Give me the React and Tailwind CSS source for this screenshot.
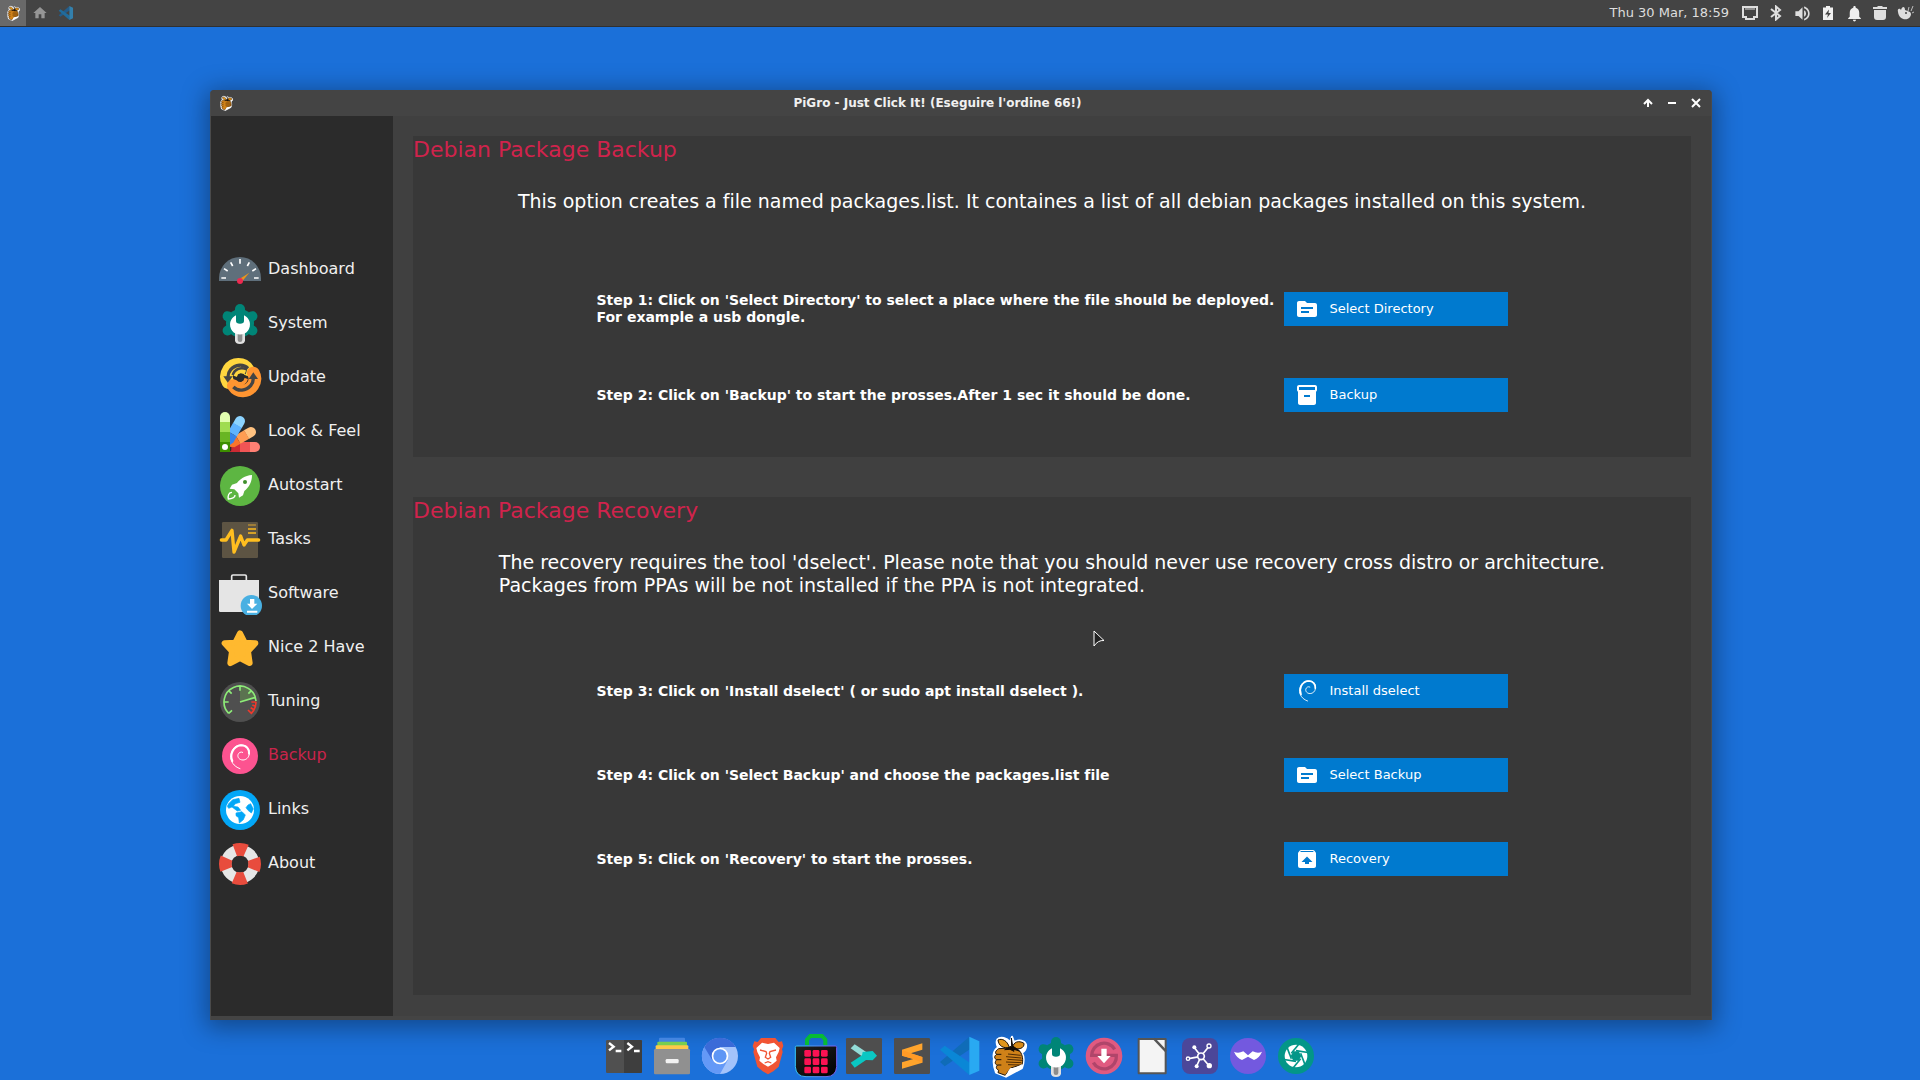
import React from "react";
import { MdSource, MdInventory2, MdUnarchive, MdHome, MdVolumeUp, MdNotifications } from "react-icons/md";

/* ---------- shared icon frame ---------- */
function Icon({ className = "size-11", children }) {
  return (
    <svg viewBox="0 0 132 132" className={`shrink-0 ${className}`} fill="none" aria-hidden="true">
      {children}
    </svg>
  );
}

/* ---------- brand icon ---------- */
function BerryIcon({ className }) {
  return (
    <Icon className={className}>
      <path d="M34 16C44 6 62 12 72 24L78 8 84 24C98 16 116 20 120 32C122 46 114 52 108 56C114 68 114 86 108 102L60 128 30 116C22 96 22 84 24 74C20 60 24 50 36 40C32 32 30 24 34 16Z" fill="#fff" stroke="#fff" strokeWidth="6" strokeLinejoin="round" />
      <path d="M38 44C28 50 26 58 32 61C24 66 24 74 32 77C26 84 26 90 34 94C28 100 32 106 38 109L36 116L58 124L74 102L108 92C112 78 110 64 102 52L72 42Z" fill="#cf8118" stroke="#1c1208" strokeWidth="3" strokeLinejoin="round" />
      <path d="M32 61h14M32 77h14M34 93h12" stroke="#1c1208" strokeWidth="3" />
      <path d="M66 60l38 4M60 68l46 4M64 76l44 3M60 84l46 2M66 92l38 1" stroke="#4f2c05" strokeWidth="3" />
      <path d="M56 127C66 118 66 108 74 102C84 102 94 98 109 90L105 103Z" fill="#fff" />
      <path d="M36 18C48 12 64 20 70 40C52 44 38 36 36 18Z" fill="#e0961c" stroke="#1c1208" strokeWidth="3" />
      <path d="M80 40C82 24 98 18 114 28C116 42 98 50 80 40Z" fill="#d98b16" stroke="#1c1208" strokeWidth="3" />
      <path d="M76 12L77 36L56 47L72 46L84 52L82 44L100 50L80 36Z" fill="#140d05" stroke="#140d05" strokeWidth="3" />
    </Icon>
  );
}

/* ---------- sidebar icons ---------- */
function DashboardIcon() {
  return (
    <Icon>
      <path d="M3 102V93A63 63 0 0 1 129 93V102Z" fill="#5f6f7b" />
      <path d="M66 36V50M38 46L44 57M94 46L88 57M18 65L29 72M114 65L103 72M10 93H24M108 93H122" stroke="#fff" strokeWidth="5" />
      <path d="M63 97L94 77L71 105Z" fill="#e8951c" />
      <circle cx="66" cy="102" r="9" fill="#ee2a50" />
    </Icon>
  );
}
function WrenchGearIcon({ className }) {
  return (
    <Icon className={className}>
      <g fill="#008577">
        <circle cx="66" cy="67" r="42" />
        <path d="M51 24a15 15 0 0 1 30 0V50H51Z" />
        <path d="M51 24a15 15 0 0 1 30 0V50H51Z" transform="rotate(60 66 67)" />
        <path d="M51 24a15 15 0 0 1 30 0V50H51Z" transform="rotate(120 66 67)" />
        <path d="M51 24a15 15 0 0 1 30 0V50H51Z" transform="rotate(240 66 67)" />
        <path d="M51 24a15 15 0 0 1 30 0V50H51Z" transform="rotate(300 66 67)" />
      </g>
      <path d="M51 88H81V118Q81 129 66 129Q51 129 51 118Z" fill="#e0e0e0" />
      <path d="M59 97H73V117Q73 123 66 123Q59 123 59 117Z" fill="#8c8c8c" />
      <path d="M54 43V60Q54 68 66 68Q78 68 78 60V43A30 30 0 1 1 54 43Z" fill="#fff" />
    </Icon>
  );
}
function UpdateHalf({ color }) {
  return (
    <>
      <path d="M90 44C76 22 46 24 32 44C24 56 22 68 30 82" stroke={color} strokeWidth="38" strokeLinecap="round" />
      <path d="M90 40C76 26 52 28 38 44C32 51 30 56 30 66" stroke="#444" strokeWidth="10" />
      <path d="M16 64H44L30 84Z" fill="#444" />
    </>
  );
}
function UpdateIcon() {
  return (
    <Icon>
      <UpdateHalf color="#ffd63f" />
      <g transform="rotate(180 68 68)"><UpdateHalf color="#ff9531" /></g>
      <path d="M50 62C54 48 66 42 86 48" stroke="#444" strokeWidth="20" />
      <path d="M52 64C56 52 68 46 82 52" stroke="#ffd63f" strokeWidth="12" />
      <path d="M84 70C80 84 70 90 54 84" stroke="#ff9531" strokeWidth="12" />
      <path d="M60 58L68 55L77 59L80 68L76 77L68 81L60 77L56 68Z" fill="#2b2b2b" />
    </Icon>
  );
}
function Swatch({ angle, colors }) {
  return (
    <g transform={`rotate(${angle} 21 114)`}>
      <path d="M6 40V24a15 15 0 0 1 30 0V40Z" fill={colors[0]} />
      <path d="M6 39H36V69H6Z" fill={colors[1]} />
      <path d="M6 69H36V99H6Z" fill={colors[2]} />
      <path d="M6 99H36V129H6Z" fill={colors[3]} />
    </g>
  );
}
function LookIcon() {
  return (
    <Icon>
      <Swatch angle={90} colors={["#ff8074", "#f05555", "#cc2a33", "#b51d28"]} />
      <path d="M36 129L6 129V90H50V110Z" fill="#2b2b2b" />
      <path d="M36 129L62 99H40V129Z" fill="#cc2a33" />
      <g transform="rotate(60 21 114)">
        <path d="M6 40V24a15 15 0 0 1 30 0V40Z" fill="#ffc280" />
        <path d="M6 39H36V69H6Z" fill="#ff9d52" />
        <path d="M6 69H36V90L22 109L6 94Z" fill="#f9752b" />
      </g>
      <g transform="rotate(30 21 114)">
        <path d="M6 40V24a15 15 0 0 1 30 0V40Z" fill="#8cd3ff" />
        <path d="M6 39H36V69H6Z" fill="#5fb3ff" />
        <path d="M6 69H36V90L22 120L6 104Z" fill="#3584ea" />
      </g>
      <Swatch angle={0} colors={["#e2ffb0", "#a0dc50", "#69b523", "#3d8f00"]} />
      <circle cx="21" cy="114" r="9" fill="#fff" />
    </Icon>
  );
}
function AutostartIcon() {
  return (
    <Icon>
      <circle cx="66" cy="69" r="60" fill="#5db642" />
      <path d="M102 36C80 38 66 48 57 60L42 65L35 77L49 79L61 91L63 104L75 97L79 84C94 72 102 56 102 36Z" fill="#fff" />
      <circle cx="81" cy="57" r="6" fill="#3f8f2c" />
      <path d="M42 88C32 88 29 98 31 108C41 107 52 104 51 96" stroke="#fff" strokeWidth="4" />
    </Icon>
  );
}
function TasksIcon() {
  return (
    <Icon>
      <rect x="12" y="15" width="108" height="108" rx="4" fill="#5d5443" />
      <path d="M90 24H114" stroke="#ac8638" strokeWidth="5" />
      <path d="M90 36H114M90 48H114" stroke="#fbb91f" strokeWidth="5" />
      <path d="M10 69H24L42 40L48 105L68 57L78 84L88 69H122" stroke="#ffbe1f" strokeWidth="10" strokeLinecap="round" strokeLinejoin="round" />
    </Icon>
  );
}
function SoftwareIcon() {
  return (
    <Icon>
      <path d="M41 28V16Q41 12 45 12H81Q85 12 85 16V28" stroke="#e8e8e8" strokeWidth="5" />
      <path d="M3 27H123V119Q123 123 119 123H7Q3 123 3 119Z" fill="#e5e5e5" />
      <circle cx="100" cy="104" r="32" fill="#49b0e2" />
      <path d="M96 84H109V98H118L102 114L87 98H96ZM87 119H118V125H87Z" fill="#fff" />
    </Icon>
  );
}
function StarIcon() {
  return (
    <Icon>
      <path d="M66 25L80 53L112 55L90 79L95 114L66 99L37 114L42 79L20 55L52 53Z" fill="#ffb92f" stroke="#ffb92f" strokeWidth="18" strokeLinejoin="round" />
    </Icon>
  );
}
function TuningIcon() {
  return (
    <Icon>
      <circle cx="66" cy="69" r="60" fill="#4f4f4f" />
      <path d="M66 69V22A47 47 0 0 1 110 54Z" fill="#5b7350" />
      <path d="M32 103A48 48 0 1 1 114 66M66 21V35M32 35L41 44M100 35L91 44M18 69H32M32 103L42 94M66 69L112 55" stroke="#8deb78" strokeWidth="5" />
      <path d="M114 68A48 48 0 0 1 100 103L90 93M100 69H114M103 78L112 82M98 86L108 92" stroke="#f0392c" strokeWidth="5" />
    </Icon>
  );
}
function Swirl() {
  return (
    <g fill="none" strokeLinecap="round">
      <path d="M66 107C46 100 37 84 38 68C40 48 54 35 69 36C86 36 95 48 94 61C93 74 84 81 75 81C64 81 58 73 60 65C62 59 68 55 74 58" strokeWidth="3" />
      <path d="M43 84C35 66 44 40 69 37C86 37 94 48 93 62" strokeWidth="6" />
    </g>
  );
}
function DebianIcon() {
  return (
    <Icon>
      <circle cx="66" cy="69" r="54" fill="#fc5390" />
      <g stroke="#fff"><Swirl /></g>
    </Icon>
  );
}
function GlobeIcon() {
  return (
    <Icon>
      <circle cx="66" cy="69" r="60" fill="#03a7f7" />
      <circle cx="66" cy="69" r="42" fill="#fff" />
      <path d="M32 50L44 38L63 34L66 46L52 50L46 58L60 60L68 70L58 72L42 60L32 64L28 58ZM54 78L72 74L82 84L76 98L64 108L62 92L54 86ZM90 54L98 50L106 66L100 78L90 70L84 62Z" fill="#03a7f7" stroke="#03a7f7" strokeWidth="2" strokeLinejoin="round" />
    </Icon>
  );
}
function AboutIcon() {
  return (
    <Icon>
      <circle cx="66" cy="69" r="42" stroke="#e6e6e6" strokeWidth="32" />
      <circle cx="66" cy="69" r="44" stroke="#e84c3d" strokeWidth="38" strokeDasharray="34.56 34.56" strokeDashoffset="17.28" />
    </Icon>
  );
}

/* ---------- dock icons ---------- */
function TerminalIcon() {
  return (
    <Icon>
      <rect x="12" y="18" width="108" height="99" rx="4" fill="#505050" />
      <path d="M66 18H116Q120 18 120 22V113Q120 117 116 117H66Z" fill="#3e3e3e" />
      <path d="M21 27L35 38L21 49M41 51H58M76 27L90 38L76 49M96 51H113" stroke="#fff" strokeWidth="7" />
    </Icon>
  );
}
function FilesIcon() {
  return (
    <Icon>
      <rect x="27" y="11" width="78" height="16" rx="3" fill="#4485e0" />
      <rect x="22" y="23" width="89" height="16" rx="3" fill="#78ce50" />
      <rect x="17" y="34" width="98" height="20" rx="3" fill="#fdc94a" />
      <rect x="12" y="45" width="108" height="76" rx="4" fill="#909090" />
      <rect x="47" y="75" width="39" height="13" rx="4" fill="#f2f2f2" />
    </Icon>
  );
}
function ChromiumIcon() {
  return (
    <Icon>
      <circle cx="66" cy="66" r="54" fill="#a3c3fb" />
      <path d="M66 66L19 39A54 54 0 0 0 66 120L89 79Z" fill="#6499f7" />
      <path d="M66 39H113A54 54 0 0 0 19 39L43 79Z" fill="#3b6bd8" />
      <circle cx="66" cy="66" r="25" fill="#fff" />
      <circle cx="66" cy="66" r="20" fill="#5e96f5" />
    </Icon>
  );
}
function LionIcon() {
  return (
    <Icon>
      <path d="M45 12H88L98 24L108 22L112 36L108 46L110 54L98 98L82 112L66 121L50 112L34 98L22 54L24 46L20 36L25 22L35 24Z" fill="#f15434" />
      <path d="M48 26L66 30L84 26L101 42L98 54L90 70L92 80L80 90L66 98L52 90L40 80L42 70L34 54L31 42Z" fill="#fff" />
      <path d="M42 48L60 53L62 58L58 70L66 75L74 70L70 58L72 53L90 48M56 87L66 83L76 87" stroke="#f15434" strokeWidth="4" />
    </Icon>
  );
}
function StoreIcon() {
  return (
    <Icon>
      <defs>
        <linearGradient id="bagEdge"><stop stopColor="#35c8f5" /><stop offset="1" stopColor="#7a5cf0" /></linearGradient>
        <linearGradient id="bagFill" x2="1" y2="1"><stop stopColor="#222" /><stop offset="1" stopColor="#000" /></linearGradient>
      </defs>
      <path d="M39 34V17L49 6H84L94 17V34" stroke="#07bb35" strokeWidth="12" />
      <path d="M8 36H124Q128 36 128 40V98Q126 128 96 128H36Q6 128 4 98V40Q4 36 8 36Z" fill="url(#bagFill)" stroke="url(#bagEdge)" strokeWidth="3" />
      {[48, 73, 98].map((y) => [31, 56, 81].map((x) => (
        <rect key={`${x}-${y}`} x={x} y={y} width="20" height="20" rx="4" fill="#fb1253" />
      )))}
    </Icon>
  );
}
function ArrowBranchIcon() {
  return (
    <Icon>
      <rect x="12" y="12" width="108" height="108" rx="4" fill="#4e4e4e" />
      <path d="M26 43L38 31L76 56L64 70Z" fill="#93dcd8" />
      <path d="M62 54L92 51L105 65L92 79L72 78L38 101L26 86L60 64Z" fill="#0ac7c3" />
    </Icon>
  );
}
function SublimeIcon() {
  return (
    <Icon>
      <rect x="12" y="12" width="108" height="108" rx="4" fill="#4e4e4e" />
      <path d="M36 47L97 28V47L62 58L97 69V86L36 104V85L70 75L36 65Z" fill="#ffa42c" />
      <path d="M36 47L62 58L97 69V86L70 75L36 65Z" fill="#ff9a26" />
    </Icon>
  );
}
function CodeIcon({ className }) {
  return (
    <Icon className={className}>
      <path d="M6 84L94 8L98 44L20 97Z" fill="#0f6cb8" />
      <path d="M6 47L20 35L98 88L94 123Z" fill="#0a87d6" />
      <path d="M94 8L124 22V110L94 123Z" fill="#29a9f2" />
    </Icon>
  );
}
function DownloadIcon() {
  return (
    <Icon>
      <circle cx="66" cy="66" r="55" fill="#e05a80" />
      <path d="M98 46A37 37 0 0 0 29 64H103A37 37 0 0 1 34 86" stroke="#b0456a" strokeWidth="10" />
      <path d="M58 44H74V66H86L66 88L46 66H58Z" fill="#fff" />
    </Icon>
  );
}
function DocumentIcon() {
  return (
    <Icon>
      <path d="M26 15H107V118H26Z" fill="#f4f4f4" stroke="#555" strokeWidth="6" strokeLinejoin="round" />
      <path d="M72 14L108 52" stroke="#555" strokeWidth="7" />
    </Icon>
  );
}
function NetworkIcon() {
  return (
    <Icon>
      <rect x="12" y="12" width="108" height="108" rx="24" fill="#4c4799" />
      <path d="M69 67L50 42M69 67L92 38M69 67L32 74M69 67L56 96M69 67L92 94" stroke="#fff" strokeWidth="5" />
      <circle cx="69" cy="67" r="10" fill="#4c4799" stroke="#fff" strokeWidth="5" />
      <g fill="#fff"><circle cx="49" cy="40" r="6" /><circle cx="56" cy="97" r="6" /><circle cx="94" cy="95" r="8" /></g>
      <g fill="#4c4799" stroke="#fff" strokeWidth="4"><circle cx="93" cy="36" r="6" /><circle cx="30" cy="74" r="5" /></g>
    </Icon>
  );
}
function MoustacheIcon() {
  return (
    <Icon>
      <circle cx="66" cy="66" r="54" fill="#7359df" />
      <path d="M24 53Q36 60 52 52L66 64L80 52Q96 60 108 53Q100 72 84 78L66 68L48 78Q32 72 24 53Z" fill="#fff" />
    </Icon>
  );
}
function ApertureIcon() {
  return (
    <Icon>
      <circle cx="66" cy="66" r="54" fill="#039688" />
      <circle cx="66" cy="66" r="34" fill="#fff" />
      <g stroke="#039688" strokeWidth="5">
        {[0, 60, 120, 180, 240, 300].map((a) => (
          <path key={a} d="M52 58L78 26" transform={`rotate(${a} 66 66)`} />
        ))}
      </g>
      <path d="M58 52H74L82 66L74 80H58L50 66Z" fill="#039688" />
    </Icon>
  );
}

/* ---------- tray icons ---------- */
const tray = [
  ["Network", <svg viewBox="0 0 16 14" className="h-3.5 w-4"><path d="M1 1h14v10h-3v2H4v-2H1z" fill="none" stroke="#dedede" strokeWidth="2" /><path d="M4 2v2M6 2v2M8 2v2M10 2v2M12 2v2" stroke="#dedede" strokeWidth="1" /></svg>],
  ["Bluetooth", <svg viewBox="0 0 12 16" className="h-4 w-3"><path d="M1 4L10 11L6 14.500V1.500L10 5L1 12" fill="none" stroke="#dedede" strokeWidth="2" /></svg>],
  ["Volume", <MdVolumeUp className="size-[19px]" />],
  ["Battery", <svg viewBox="0 0 10 14" className="h-3.5 w-2.5"><path d="M0 1.500H3V0H7V1.500H10V14H0Z" fill="#f0f0f0" /><path d="M6 3.500L2 8.500H5L4 12L8 7H5.500Z" fill="#444" /></svg>],
  ["Notifications", <MdNotifications className="size-[19px] text-[#f0f0f0]" />],
  ["Trash", <svg viewBox="0 0 16 16" className="size-4"><path d="M1 2h4l1-1h4l1 1h4v2H1zM2 5h12v7q0 3-3 3H5q-3 0-3-3z" fill="#dedede" /></svg>],
  ["Mouse", <svg viewBox="0 0 18 16" className="h-4 w-[18px]"><path d="M1 7C0 3 3 3 4 5C5 1 8 1 8 5L13 7Q15 9 13 12C10 16 2 15 1 7Z" fill="#dedede" /><circle cx="9" cy="8" r="1" fill="#444" /><path d="M11 6l1-4M14 6l2-5M15 8l2-1" stroke="#bdbdbd" /></svg>],
];

const nav = [
  ["Dashboard", DashboardIcon], ["System", WrenchGearIcon], ["Update", UpdateIcon], ["Look & Feel", LookIcon],
  ["Autostart", AutostartIcon], ["Tasks", TasksIcon], ["Software", SoftwareIcon], ["Nice 2 Have", StarIcon],
  ["Tuning", TuningIcon], ["Backup", DebianIcon], ["Links", GlobeIcon], ["About", AboutIcon],
];

const dock = [
  ["Terminal", TerminalIcon], ["Files", FilesIcon], ["Chromium", ChromiumIcon], ["Brave", LionIcon], ["Store", StoreIcon],
  ["Tabby", ArrowBranchIcon], ["Sublime Text", SublimeIcon], ["Code", CodeIcon], ["PiGro", BerryIcon],
  ["Settings", WrenchGearIcon], ["Downloader", DownloadIcon], ["Documents", DocumentIcon], ["Nodes", NetworkIcon],
  ["Moustache", MoustacheIcon], ["Screenshot", ApertureIcon],
];

/* ---------- content pieces ---------- */
function Step({ text, icon, action }) {
  return (
    <div className="flex items-center justify-between">
      <p className="whitespace-pre-line text-[14px] leading-[17px] font-bold">{text}</p>
      <button className="flex h-[34px] w-56 shrink-0 items-center gap-[11px] bg-[#007acf] pl-[11px] text-[13px] leading-4">
        {icon}
        {action}
      </button>
    </div>
  );
}
function Panel({ title, intro, className, stepsClass, children }) {
  return (
    <section className={`flex flex-col bg-[#383838] ${className}`}>
      <h2 className="text-[22px] leading-7 text-[#d0234c]">{title}</h2>
      <p className="mx-auto mt-[26px] whitespace-pre-line text-[19px] leading-[23px]">{intro}</p>
      <div className={`mx-auto flex w-[911px] max-w-full flex-col ${stepsClass}`}>{children}</div>
    </section>
  );
}

export default function App() {
  return (
    <div className="relative flex h-screen flex-col overflow-hidden bg-[#1b70d9] text-white [font-family:'DejaVu_Sans',sans-serif] [font-variant-ligatures:none]">
      <header className="flex h-[27px] shrink-0 items-center justify-between border-b border-[#303030] bg-[#444444]">
        <div className="flex h-full items-center">
          <button aria-label="PiGro" className="flex h-full w-[26px] items-center justify-center bg-[#696969]"><BerryIcon className="size-4" /></button>
          <button aria-label="Home" className="flex w-[27px] justify-center text-[#969696]"><MdHome className="size-4" /></button>
          <button aria-label="Code" className="flex w-[25px] justify-center opacity-60"><CodeIcon className="size-4" /></button>
        </div>
        <div className="flex items-center pr-px text-[#dedede]">
          <time className="mr-2 text-[13px] leading-4">Thu 30 Mar, 18:59</time>
          {tray.map(([label, icon]) => (
            <button key={label} aria-label={label} className="flex w-[26px] justify-center">{icon}</button>
          ))}
        </div>
      </header>

      <main className="flex min-h-0 flex-1 pt-[63px] pr-[208px] pl-[210px]">
        <div className="flex min-w-0 flex-1 flex-col rounded-t-sm border-x border-[#4a4a4a] bg-[#404040] shadow-[0_4px_24px_4px_rgba(0,0,0,0.35)]">
          <div className="flex h-[26px] shrink-0 items-center rounded-t-sm bg-[#444444]">
            <div className="flex w-7 justify-center pl-0.5"><BerryIcon className="size-4" /></div>
            <h1 className="flex-1 text-center text-[12px] leading-4 font-bold text-[#f0f0f0]">PiGro - Just Click It! (Eseguire l'ordine 66!)</h1>
            <div className="flex pr-[3px]">
              <button aria-label="Roll up" className="flex w-6 justify-center"><svg viewBox="0 0 10 10" className="size-2.5"><path d="M5 9V2M1 6L5 2L9 6" fill="none" stroke="#fff" strokeWidth="2" /></svg></button>
              <button aria-label="Minimize" className="flex w-6 justify-center"><svg viewBox="0 0 10 10" className="size-2.5"><path d="M1 5H9" stroke="#fff" strokeWidth="2" /></svg></button>
              <button aria-label="Close" className="flex w-6 justify-center"><svg viewBox="0 0 10 10" className="size-2.5"><path d="M1 1L9 9M9 1L1 9" stroke="#fff" strokeWidth="2" /></svg></button>
            </div>
          </div>

          <div className="flex min-h-0 flex-1">
            <nav className="flex w-[182px] shrink-0 flex-col justify-center bg-[#2b2b2b] pb-px">
              {nav.map(([label, Glyph]) => (
                <a key={label} href="#" className={label === "Backup" ? "flex h-[54px] items-center gap-1.5 pl-[7px] text-[16px] text-[#c9244b]" : "flex h-[54px] items-center gap-1.5 pl-[7px] text-[16px] text-[#f0f0f0]"}>
                  <Glyph />
                  <span>{label}</span>
                </a>
              ))}
            </nav>
            <div className="flex min-w-0 flex-1 flex-col gap-10 px-5 pt-5 pb-[21px]">
              <Panel title="Debian Package Backup" intro="This option creates a file named packages.list. It containes a list of all debian packages installed on this system." className="pb-[45px]" stepsClass="mt-[79px] gap-[52px]">
                <Step text={"Step 1: Click on 'Select Directory' to select a place where the file should be deployed.\nFor example a usb dongle."} icon={<MdSource className="size-6" />} action="Select Directory" />
                <Step text="Step 2: Click on 'Backup' to start the prosses.After 1 sec it should be done." icon={<MdInventory2 className="size-6" />} action="Backup" />
              </Panel>
              <Panel title="Debian Package Recovery" intro={"The recovery requires the tool 'dselect'. Please note that you should never use recovery cross distro or architecture.\nPackages from PPAs will be not installed if the PPA is not integrated."} className="flex-1" stepsClass="mt-[77px] gap-[50px]">
                <Step text="Step 3: Click on 'Install dselect' ( or sudo apt install dselect )." icon={<svg viewBox="22 30 84 84" className="size-6" aria-hidden="true"><g stroke="#fff"><Swirl /></g></svg>} action="Install dselect" />
                <Step text="Step 4: Click on 'Select Backup' and choose the packages.list file" icon={<MdSource className="size-6" />} action="Select Backup" />
                <Step text="Step 5: Click on 'Recovery' to start the prosses." icon={<MdUnarchive className="size-6" />} action="Recovery" />
              </Panel>
            </div>
          </div>
          <div className="h-1 shrink-0 bg-[#444444]" />
        </div>
      </main>

      <footer className="flex h-[60px] shrink-0 items-center justify-center gap-1 pt-3">
        {dock.map(([label, Glyph]) => (
          <button key={label} aria-label={label}><Glyph /></button>
        ))}
      </footer>

      <svg viewBox="0 0 12 17" className="pointer-events-none absolute top-[630px] left-[1093px] h-[17px] w-3" aria-hidden="true">
        <path d="M1 1V16Q5 10 11 10.500Z" fill="#222" stroke="#fff" strokeWidth="1" />
      </svg>
    </div>
  );
}
